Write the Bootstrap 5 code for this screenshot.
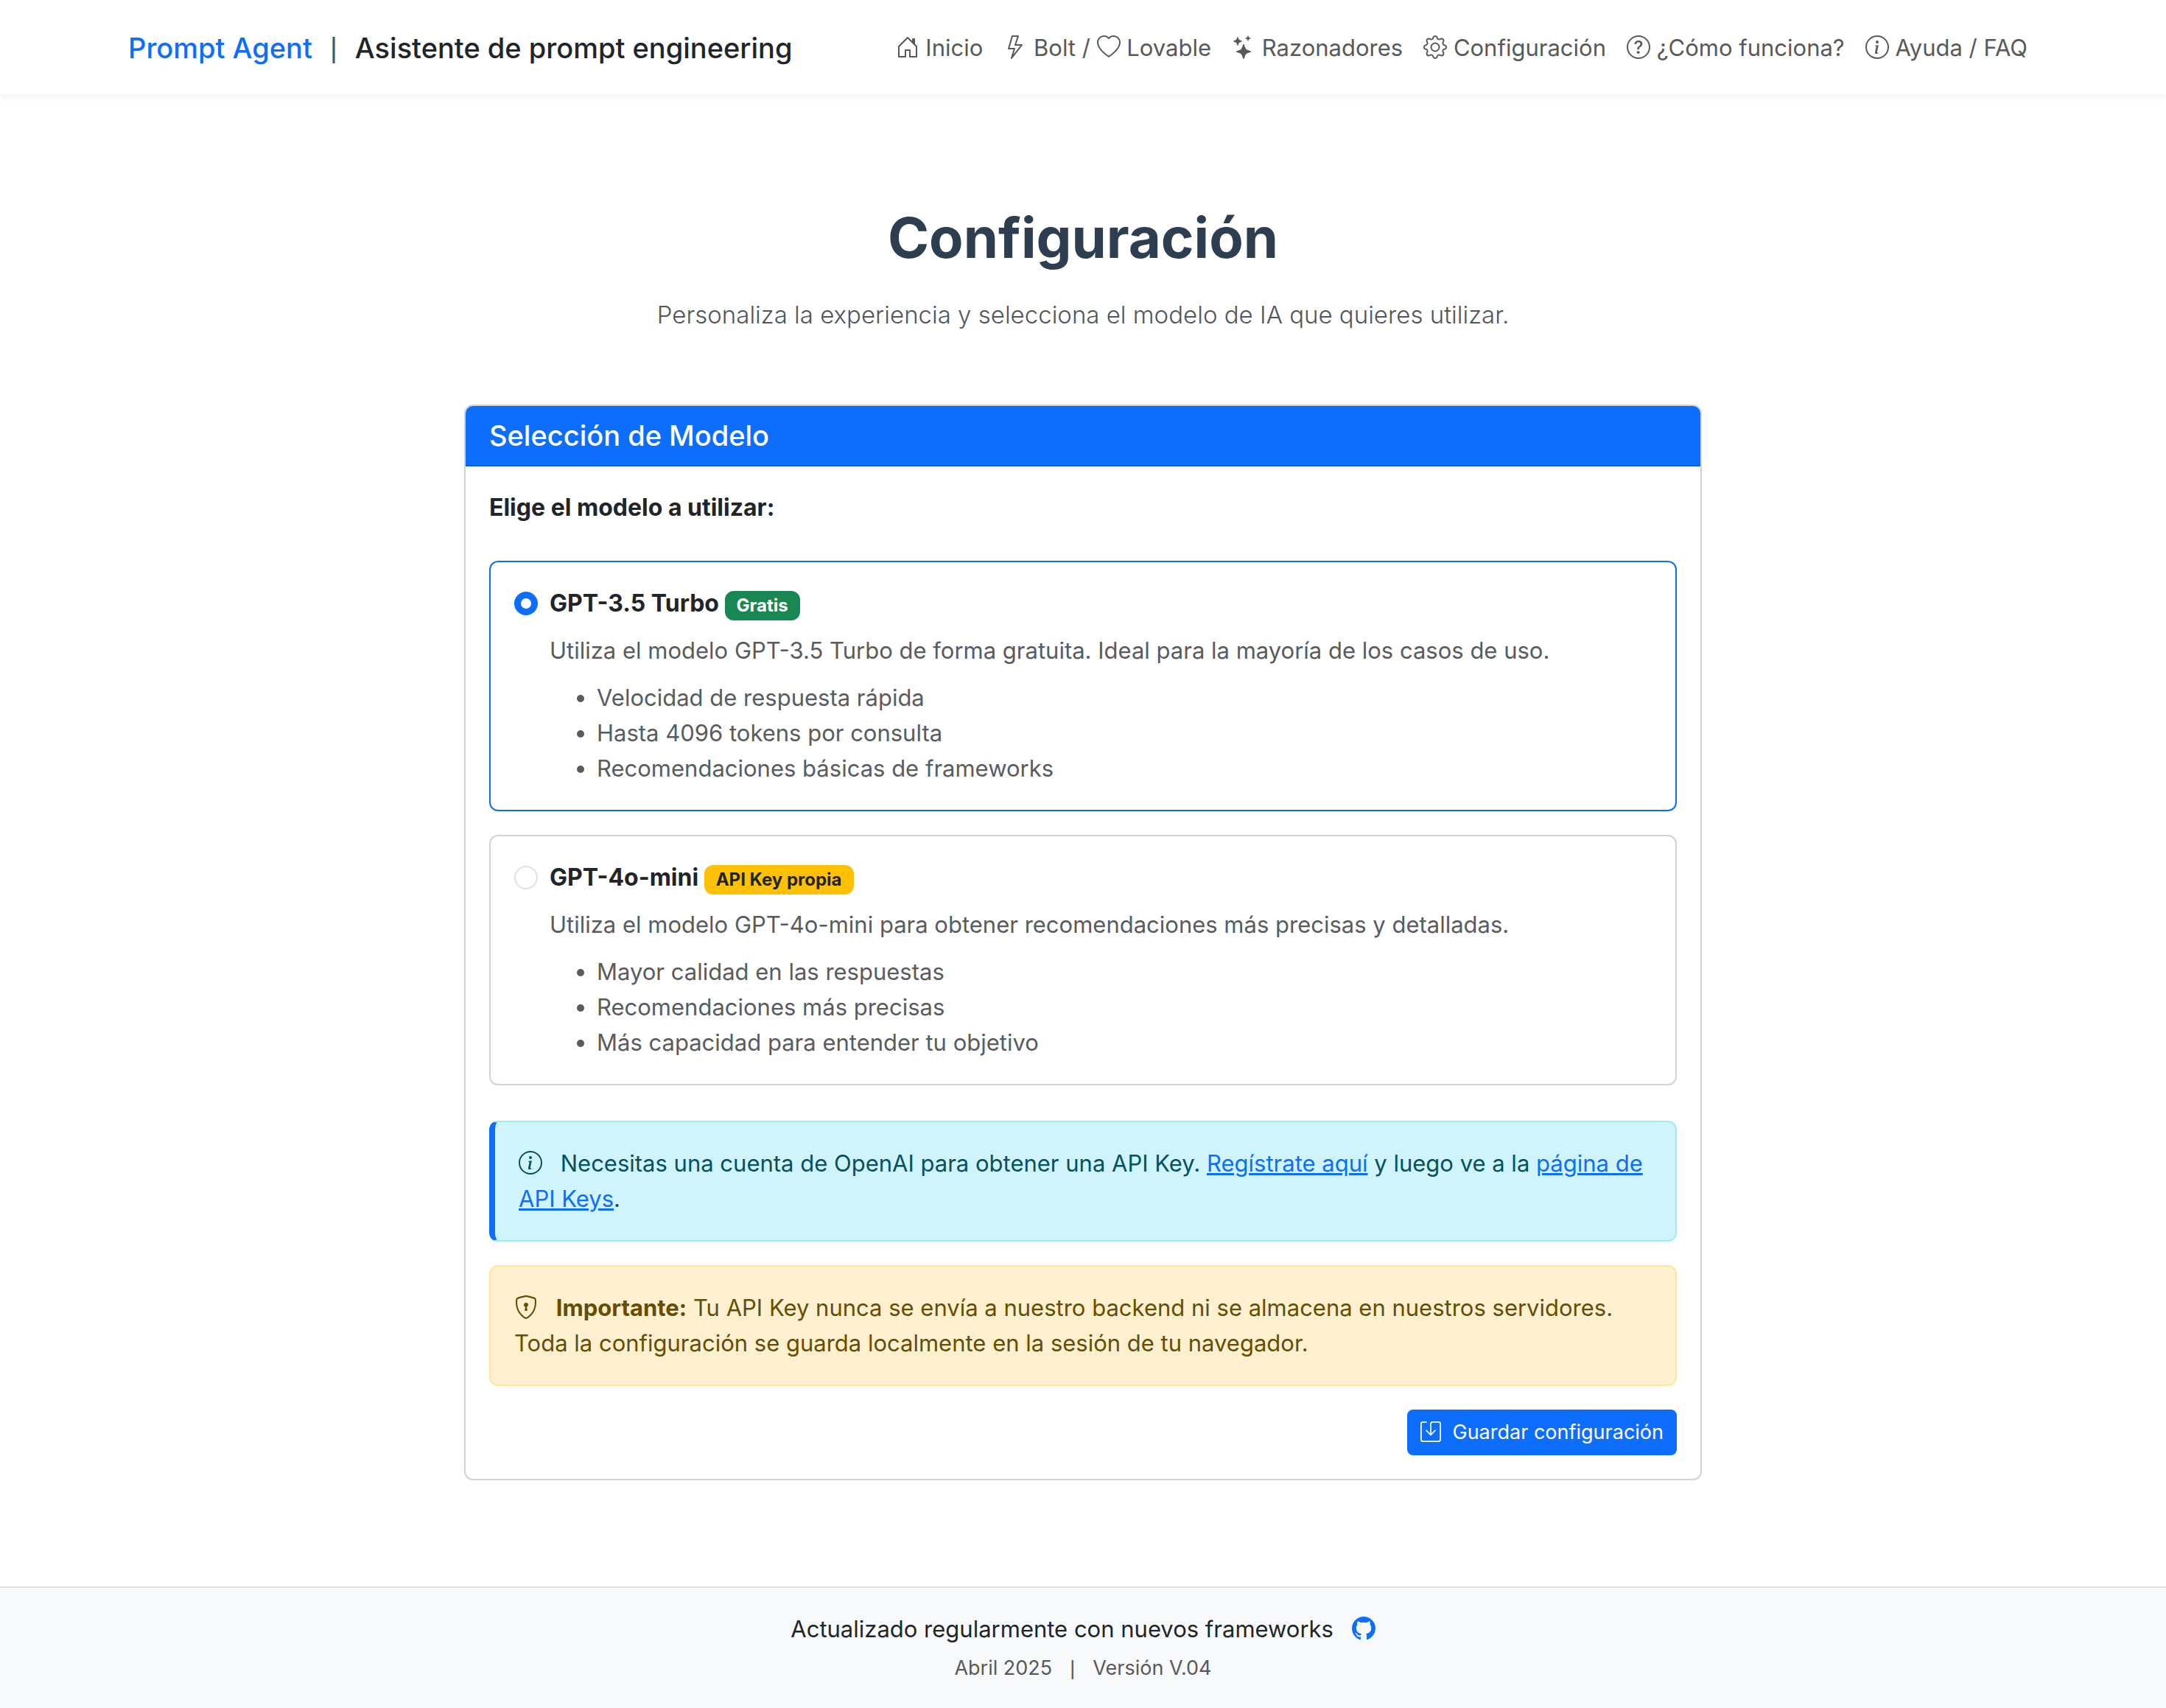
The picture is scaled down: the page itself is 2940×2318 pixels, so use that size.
<!DOCTYPE html>
<html lang="es">
<head>
<meta charset="utf-8">
<meta name="viewport" content="width=device-width, initial-scale=1">
<title>Prompt Agent | Configuración</title>
<link href="https://cdn.jsdelivr.net/npm/bootstrap@5.3.0/dist/css/bootstrap.min.css" rel="stylesheet">
<style>
  :root { font-size: 32px; --bs-border-width: 2px; --bs-border-radius: 12px; --bs-border-radius-sm: 8px; }
  body { font-family: Inter, "Liberation Sans", sans-serif; font-size: 31px; line-height: 48px; color: #212529; background: #fff; }
  .container { max-width: 2640px; }
  .site-nav { --bs-navbar-nav-link-padding-x: 14px; padding: 25px 0 23px; background: #fff; box-shadow: 0 4px 8px rgba(0,0,0,.05); }
  .site-nav .navbar-brand { font-size: 38px; line-height: 60px; font-weight: 500; padding: 10px 0; margin: 0; color: #212529; display: flex; gap: 24px; }
  .site-nav .brand-name { color: #0d6efd; text-decoration: none; }
  .divider-bar { font-family: "Liberation Sans", sans-serif; font-weight: 400; }
  .brand-divider { color: #50555a; }
  .site-nav .nav-link { color: #595959; font-size: 31px; white-space: nowrap; }
  .ico { width: 32px; height: 32px; fill: currentColor; vertical-align: -4px; }
  .page-title { font-size: 76px; line-height: 96px; font-weight: 700; color: #2c3e50; margin: 0 0 30px; }
  .page-intro { font-size: 33px; line-height: 54px; font-weight: 300; color: #50555a; margin: 0 0 95px; }
  .hero-block { padding-top: 146px; padding-bottom: 144px; }
  .form-column { padding: 0 24px; }
  .card { --bs-card-border-width: 2px; --bs-card-border-radius: 12px; --bs-card-inner-border-radius: 10px; --bs-card-border-color: #d2d3d4; --bs-card-spacer-x: 32px; --bs-card-spacer-y: 32px; }
  .card-header { border-bottom: 2px solid #0b5ed7; }
  .card-header h2 { font-size: 38px; line-height: 48px; font-weight: 500; margin: 0; }
  .option-picked { --bs-card-border-color: #0d6efd; }
  .strong-label { font-size: 32px; font-weight: 700; }
  .form-check { padding-left: 48px; min-height: 0; }
  .form-check label { display: block; }
  .form-check .form-check-input { width: 32px; height: 32px; margin-left: -48px; margin-top: 8px; border-width: 2px; border-color: #dee2e6; }
  .form-check .form-check-input:checked { border-color: #0d6efd; }
  .badge { font-size: 24px; padding: 8px 16px; border-radius: 12px; }
  .option-text { color: #585c5f; }
  .option-text ul { padding-left: 64px; }
  .alert { --bs-alert-padding-x: 32px; --bs-alert-padding-y: 32px; border-width: 2px; border-radius: 12px; }
  .alert-info { color: #055160; background: #cff4fc; border-color: #9eeaf9; border-left: 8px solid #0d6efd; }
  .alert-warning { color: #664d03; background: #fff1cf; border-color: #ffe69c; }
  .alert a { color: #0d6efd; }
  .btn-sm { font-size: 27px; line-height: 42px; padding: 8px 16px; border-width: 2px; border-radius: 8px; }
  .btn-sm .ico { width: 28px; height: 28px; }
  .site-footer { background: #f8f9fb; border-top: 2px solid #dee2e6; padding: 32px 0 33px; }
  .release { font-size: 27px; line-height: 42px; color: #595959; gap: 24px; }
</style>
</head>
<body>
<nav class="navbar navbar-expand site-nav">
  <div class="container">
    <div class="navbar-brand">
      <a class="brand-name" href="#">Prompt Agent</a><span class="divider-bar brand-divider">|</span><span>Asistente de prompt engineering</span>
    </div>
    <ul class="navbar-nav ms-auto">
      <li class="nav-item"><a class="nav-link" href="#"><svg class="ico" viewBox="0 0 16 16" aria-hidden="true"><path d="M8.354 1.146a.5.5 0 0 0-.708 0l-6 6A.5.5 0 0 0 1.5 7.5v7a.5.5 0 0 0 .5.5h4.5a.5.5 0 0 0 .5-.5v-4h2v4a.5.5 0 0 0 .5.5H14a.5.5 0 0 0 .5-.5v-7a.5.5 0 0 0-.146-.354L13 5.793V2.5a.5.5 0 0 0-.5-.5h-1a.5.5 0 0 0-.5.5v1.293L8.354 1.146zM2.5 14V7.707l5.5-5.5 5.5 5.5V14H10v-4a.5.5 0 0 0-.5-.5h-3a.5.5 0 0 0-.5.5v4H2.5z"/></svg> Inicio</a></li>
      <li class="nav-item"><a class="nav-link" href="#"><svg class="ico" viewBox="0 0 16 16" aria-hidden="true"><path d="M5.52.359A.5.5 0 0 1 6 0h4a.5.5 0 0 1 .474.658L8.694 6H12.5a.5.5 0 0 1 .395.807l-7 9a.5.5 0 0 1-.873-.454L6.823 9.5H3.5a.5.5 0 0 1-.48-.641l2.5-8.5zM6.374 1 4.168 8.5H7.5a.5.5 0 0 1 .478.647L6.78 13.04 11.478 7H8a.5.5 0 0 1-.474-.658L9.306 1H6.374z"/></svg> Bolt / <svg class="ico" viewBox="0 0 16 16" aria-hidden="true"><path d="m8 2.748-.717-.737C5.6.281 2.514.878 1.4 3.053c-.523 1.023-.641 2.5.314 4.385.92 1.815 2.834 3.989 6.286 6.357 3.452-2.368 5.365-4.542 6.286-6.357.955-1.886.838-3.362.314-4.385C13.486.878 10.4.28 8.717 2.01L8 2.748zM8 15C-7.333 4.868 3.279-3.04 7.824 1.143c.06.055.119.112.176.171a3.12 3.12 0 0 1 .176-.17C12.72-3.042 23.333 4.867 8 15z"/></svg> Lovable</a></li>
      <li class="nav-item"><a class="nav-link" href="#"><svg class="ico" viewBox="0 0 16 16" aria-hidden="true"><path d="M7.657 6.247c.11-.33.576-.33.686 0l.645 1.937a2.89 2.89 0 0 0 1.829 1.828l1.936.645c.33.11.33.576 0 .686l-1.937.645a2.89 2.89 0 0 0-1.828 1.829l-.645 1.936a.361.361 0 0 1-.686 0l-.645-1.937a2.89 2.89 0 0 0-1.828-1.828l-1.937-.645a.361.361 0 0 1 0-.686l1.937-.645a2.89 2.89 0 0 0 1.828-1.828l.645-1.937zM3.794 1.148a.217.217 0 0 1 .412 0l.387 1.162c.173.518.579.924 1.097 1.097l1.162.387a.217.217 0 0 1 0 .412l-1.162.387A1.734 1.734 0 0 0 4.593 5.69l-.387 1.162a.217.217 0 0 1-.412 0L3.407 5.69A1.734 1.734 0 0 0 2.31 4.593l-1.162-.387a.217.217 0 0 1 0-.412l1.162-.387A1.734 1.734 0 0 0 3.407 2.31l.387-1.162zM10.863.099a.145.145 0 0 1 .274 0l.258.774c.115.346.386.617.732.732l.774.258a.145.145 0 0 1 0 .274l-.774.258a1.156 1.156 0 0 0-.732.732l-.258.774a.145.145 0 0 1-.274 0l-.258-.774a1.156 1.156 0 0 0-.732-.732L9.1 2.137a.145.145 0 0 1 0-.274l.774-.258c.346-.115.617-.386.732-.732L10.863.1z"/></svg> Razonadores</a></li>
      <li class="nav-item"><a class="nav-link" href="#"><svg class="ico" viewBox="0 0 16 16" aria-hidden="true"><path d="M8 4.754a3.246 3.246 0 1 0 0 6.492 3.246 3.246 0 0 0 0-6.492zM5.754 8a2.246 2.246 0 1 1 4.492 0 2.246 2.246 0 0 1-4.492 0z"/><path d="M9.796 1.343c-.527-1.79-3.065-1.79-3.592 0l-.094.319a.873.873 0 0 1-1.255.52l-.292-.16c-1.64-.892-3.433.902-2.54 2.541l.159.292a.873.873 0 0 1-.52 1.255l-.319.094c-1.79.527-1.79 3.065 0 3.592l.319.094a.873.873 0 0 1 .52 1.255l-.16.292c-.892 1.64.901 3.434 2.541 2.54l.292-.159a.873.873 0 0 1 1.255.52l.094.319c.527 1.79 3.065 1.79 3.592 0l.094-.319a.873.873 0 0 1 1.255-.52l.292.16c1.64.893 3.434-.902 2.54-2.541l-.159-.292a.873.873 0 0 1 .52-1.255l.319-.094c1.79-.527 1.79-3.065 0-3.592l-.319-.094a.873.873 0 0 1-.52-1.255l.16-.292c.893-1.64-.902-3.433-2.541-2.54l-.292.159a.873.873 0 0 1-1.255-.52l-.094-.319zm-2.633.283c.246-.835 1.428-.835 1.674 0l.094.319a1.873 1.873 0 0 0 2.693 1.115l.291-.16c.764-.415 1.6.42 1.184 1.185l-.159.292a1.873 1.873 0 0 0 1.116 2.692l.318.094c.835.246.835 1.428 0 1.674l-.319.094a1.873 1.873 0 0 0-1.115 2.693l.16.291c.415.764-.42 1.6-1.185 1.184l-.291-.159a1.873 1.873 0 0 0-2.693 1.116l-.094.318c-.246.835-1.428.835-1.674 0l-.094-.319a1.873 1.873 0 0 0-2.692-1.115l-.292.16c-.764.415-1.6-.42-1.184-1.185l.159-.291A1.873 1.873 0 0 0 1.945 8.93l-.319-.094c-.835-.246-.835-1.428 0-1.674l.319-.094A1.873 1.873 0 0 0 3.06 4.377l-.16-.292c-.415-.764.42-1.6 1.185-1.184l.292.159a1.873 1.873 0 0 0 2.692-1.115l.094-.319z"/></svg> Configuración</a></li>
      <li class="nav-item"><a class="nav-link" href="#"><svg class="ico" viewBox="0 0 16 16" aria-hidden="true"><path d="M8 15A7 7 0 1 1 8 1a7 7 0 0 1 0 14zm0 1A8 8 0 1 0 8 0a8 8 0 0 0 0 16z"/><path d="M5.255 5.786a.237.237 0 0 0 .241.247h.825c.138 0 .248-.113.266-.25.09-.656.54-1.134 1.342-1.134.686 0 1.314.343 1.314 1.168 0 .635-.374.927-.965 1.371-.673.489-1.206 1.06-1.168 1.987l.003.217a.25.25 0 0 0 .25.246h.811a.25.25 0 0 0 .25-.25v-.105c0-.718.273-.927 1.01-1.486.609-.463 1.244-.977 1.244-2.056 0-1.511-1.276-2.241-2.673-2.241-1.267 0-2.655.59-2.75 2.286zm1.557 5.763c0 .533.425.927 1.01.927.609 0 1.028-.394 1.028-.927 0-.552-.42-.94-1.029-.94-.584 0-1.009.388-1.009.94z"/></svg> ¿Cómo funciona?</a></li>
      <li class="nav-item"><a class="nav-link" href="#"><svg class="ico" viewBox="0 0 16 16" aria-hidden="true"><path d="M8 15A7 7 0 1 1 8 1a7 7 0 0 1 0 14zm0 1A8 8 0 1 0 8 0a8 8 0 0 0 0 16z"/><path d="m8.93 6.588-2.29.287-.082.38.45.083c.294.07.352.176.288.469l-.738 3.468c-.194.897.105 1.319.808 1.319.545 0 1.178-.252 1.465-.598l.088-.416c-.2.176-.492.246-.686.246-.275 0-.375-.193-.304-.533L8.93 6.588zM9 4.5a1 1 0 1 1-2 0 1 1 0 0 1 2 0z"/></svg> Ayuda / FAQ</a></li>
    </ul>
  </div>
</nav>

<main class="container hero-block">
  <header class="text-center">
    <h1 class="page-title">Configuración</h1>
    <p class="page-intro">Personaliza la experiencia y selecciona el modelo de IA que quieres utilizar.</p>
  </header>
  <div class="col-8 mx-auto form-column">
    <form class="card">
      <div class="card-header bg-primary text-white"><h2>Selección de Modelo</h2></div>
      <div class="card-body">
        <p class="strong-label mb-4">Elige el modelo a utilizar:</p>
        <div class="card option-picked mb-3">
          <div class="card-body">
            <div class="form-check mb-0">
              <input class="form-check-input" type="radio" name="modelo" id="gpt35" checked>
              <label class="strong-label" for="gpt35">GPT-3.5 Turbo <span class="badge bg-success">Gratis</span></label>
              <div class="option-text mt-2">
                <p class="mb-2">Utiliza el modelo GPT-3.5 Turbo de forma gratuita. Ideal para la mayoría de los casos de uso.</p>
                <ul class="mb-0"><li>Velocidad de respuesta rápida</li><li>Hasta 4096 tokens por consulta</li><li>Recomendaciones básicas de frameworks</li></ul>
              </div>
            </div>
          </div>
        </div>
        <div class="card mb-4">
          <div class="card-body">
            <div class="form-check mb-0">
              <input class="form-check-input" type="radio" name="modelo" id="gpt4o">
              <label class="strong-label" for="gpt4o">GPT-4o-mini <span class="badge bg-warning text-dark">API Key propia</span></label>
              <div class="option-text mt-2">
                <p class="mb-2">Utiliza el modelo GPT-4o-mini para obtener recomendaciones más precisas y detalladas.</p>
                <ul class="mb-0"><li>Mayor calidad en las respuestas</li><li>Recomendaciones más precisas</li><li>Más capacidad para entender tu objetivo</li></ul>
              </div>
            </div>
          </div>
        </div>
        <div class="alert alert-info mb-3"><svg class="ico me-2" viewBox="0 0 16 16" aria-hidden="true"><path d="M8 15A7 7 0 1 1 8 1a7 7 0 0 1 0 14zm0 1A8 8 0 1 0 8 0a8 8 0 0 0 0 16z"/><path d="m8.93 6.588-2.29.287-.082.38.45.083c.294.07.352.176.288.469l-.738 3.468c-.194.897.105 1.319.808 1.319.545 0 1.178-.252 1.465-.598l.088-.416c-.2.176-.492.246-.686.246-.275 0-.375-.193-.304-.533L8.93 6.588zM9 4.5a1 1 0 1 1-2 0 1 1 0 0 1 2 0z"/></svg> Necesitas una cuenta de OpenAI para obtener una API Key. <a href="#">Regístrate aquí</a> y luego ve a la <a href="#">página de API Keys</a>.</div>
        <div class="alert alert-warning mb-3"><svg class="ico me-2" viewBox="0 0 16 16" aria-hidden="true"><path d="M5.338 1.59a61.44 61.44 0 0 0-2.837.856.481.481 0 0 0-.328.39c-.554 4.157.726 7.19 2.253 9.188a10.725 10.725 0 0 0 2.287 2.233c.346.244.652.42.893.533.12.057.218.095.293.118a.55.55 0 0 0 .101.025.615.615 0 0 0 .1-.025c.076-.023.174-.061.294-.118.24-.113.547-.29.893-.533a10.726 10.726 0 0 0 2.287-2.233c1.527-1.997 2.807-5.031 2.253-9.188a.48.48 0 0 0-.328-.39c-.651-.213-1.75-.56-2.837-.855C9.552 1.29 8.531 1.067 8 1.067c-.53 0-1.552.223-2.662.524zM5.072.56C6.157.265 7.31 0 8 0s1.843.265 2.928.56c1.11.3 2.229.655 2.887.87a1.54 1.54 0 0 1 1.044 1.262c.596 4.477-.787 7.795-2.465 9.99a11.775 11.775 0 0 1-2.517 2.453 7.159 7.159 0 0 1-1.048.625c-.28.132-.581.24-.829.24s-.548-.108-.829-.24a7.158 7.158 0 0 1-1.048-.625 11.777 11.777 0 0 1-2.517-2.453C1.928 10.487.545 7.169 1.141 2.692A1.54 1.54 0 0 1 2.185 1.43 62.456 62.456 0 0 1 5.072.56z"/><path d="M9.5 6.5a1.5 1.5 0 0 1-1 1.415l.385 1.99a.5.5 0 0 1-.491.595h-.788a.5.5 0 0 1-.49-.595l.384-1.99a1.5 1.5 0 1 1 2-1.415z"/></svg> <strong>Importante:</strong> Tu API Key nunca se envía a nuestro backend ni se almacena en nuestros servidores. Toda la configuración se guarda localmente en la sesión de tu navegador.</div>
        <div class="d-flex justify-content-end">
          <button type="submit" class="btn btn-primary btn-sm"><svg class="ico me-1" viewBox="0 0 16 16" aria-hidden="true"><path d="M2 1a1 1 0 0 0-1 1v12a1 1 0 0 0 1 1h12a1 1 0 0 0 1-1V2a1 1 0 0 0-1-1H9.5a1 1 0 0 0-1 1v7.293l2.646-2.647a.5.5 0 0 1 .708.708l-3.5 3.5a.5.5 0 0 1-.708 0l-3.5-3.5a.5.5 0 1 1 .708-.708L7.5 9.293V2a2 2 0 0 1 2-2H14a2 2 0 0 1 2 2v12a2 2 0 0 1-2 2H2a2 2 0 0 1-2-2V2a2 2 0 0 1 2-2h2.5a.5.5 0 0 1 0 1H2z"/></svg> Guardar configuración</button>
        </div>
      </div>
    </form>
  </div>
</main>

<footer class="site-footer text-center">
  <div class="container">
    <p class="mb-1">Actualizado regularmente con nuevos frameworks <a class="ms-2" href="#" aria-label="GitHub"><svg class="ico" viewBox="0 0 16 16" aria-hidden="true"><path d="M8 0C3.58 0 0 3.58 0 8c0 3.54 2.29 6.53 5.47 7.59.4.07.55-.17.55-.38 0-.19-.01-.82-.01-1.49-2.01.37-2.53-.49-2.69-.94-.09-.23-.48-.94-.82-1.13-.28-.15-.68-.52-.01-.53.63-.01 1.08.58 1.23.82.72 1.21 1.87.87 2.33.66.07-.52.28-.87.51-1.07-1.78-.2-3.64-.89-3.64-3.95 0-.87.31-1.59.82-2.15-.08-.2-.36-1.02.08-2.12 0 0 .67-.21 2.2.82.64-.18 1.32-.27 2-.27.68 0 1.36.09 2 .27 1.53-1.04 2.2-.82 2.2-.82.44 1.1.16 1.92.08 2.12.51.56.82 1.27.82 2.15 0 3.07-1.87 3.75-3.65 3.95.29.25.54.73.54 1.48 0 1.07-.01 1.93-.01 2.2 0 .21.15.46.55.38A8.012 8.012 0 0 0 16 8c0-4.42-3.58-8-8-8z"/></svg></a></p>
    <div class="release d-flex justify-content-center"><span>Abril 2025</span><span class="divider-bar">|</span><span>Versión V.04</span></div>
  </div>
</footer>
<script src="https://cdn.jsdelivr.net/npm/bootstrap@5.3.0/dist/js/bootstrap.bundle.min.js"></script>
</body>
</html>
